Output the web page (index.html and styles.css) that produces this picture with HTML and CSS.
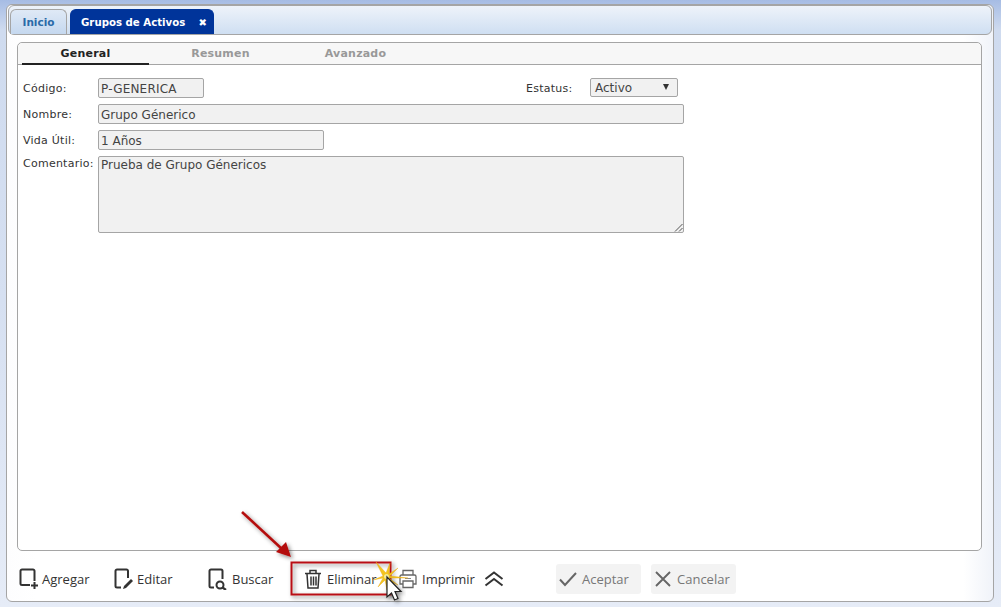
FILE: index.html
```html
<!DOCTYPE html>
<html lang="es">
<head>
<meta charset="utf-8">
<title>Grupos de Activos</title>
<link rel="stylesheet" href="styles.css">
</head>
<body>
<div class="window">
  <div class="tabbar">
    <div class="tab tab-home">Inicio</div>
    <div class="tab tab-active"><span>Grupos de Activos</span><span class="tab-close">✖</span></div>
  </div>
  <div class="panel">
    <div class="subtabs">
      <div class="subtab on">General</div>
      <div class="subtab">Resumen</div>
      <div class="subtab">Avanzado</div>
    </div>
    <div class="form">
      <div class="row row-code">
        <label class="lbl">Código:</label>
        <div class="field f-code">P-GENERICA</div>
        <label class="lbl lbl-status">Estatus:</label>
        <div class="select"><span>Activo</span><span class="caret"></span></div>
      </div>
      <div class="row">
        <label class="lbl">Nombre:</label>
        <div class="field f-wide">Grupo Génerico</div>
      </div>
      <div class="row">
        <label class="lbl">Vida Útil:</label>
        <div class="field f-mid">1 Años</div>
      </div>
      <div class="row row-area">
        <label class="lbl">Comentario:</label>
        <div class="field f-area">Prueba de Grupo Génericos
          <svg class="grip" width="9" height="9" viewBox="0 0 9 9"><path d="M8.500 1 1 8.500M8.500 5 5 8.500" stroke="#555" fill="none"/></svg>
        </div>
      </div>
    </div>
  </div>
  <div class="toolbar">
    <div class="tool t-add">
      <svg width="20" height="22" viewBox="0 0 20 22"><path d="M11 17H3a1.500 1.500 0 0 1-1.500-1.500V3A1.500 1.500 0 0 1 3 1.500h11A1.500 1.500 0 0 1 15.500 3v10" fill="none" stroke="#333" stroke-width="2"/><path d="M15.500 14v7M12 17.500h7" stroke="#333" stroke-width="2" fill="none"/></svg>
      <span>Agregar</span>
    </div>
    <div class="tool t-edit">
      <svg width="20" height="22" viewBox="0 0 20 22"><path d="M7 19.500H3a1.500 1.500 0 0 1-1.500-1.500V3A1.500 1.500 0 0 1 3 1.500h9.500A1.500 1.500 0 0 1 14 3v7" fill="none" stroke="#333" stroke-width="2"/><path d="M9 21l1-3 7-7 2 2-7 7z" fill="#333"/></svg>
      <span>Editar</span>
    </div>
    <div class="tool t-find">
      <svg width="20" height="22" viewBox="0 0 20 22"><path d="M6 19.500H3a1.500 1.500 0 0 1-1.500-1.500V3A1.500 1.500 0 0 1 3 1.500h10A1.500 1.500 0 0 1 14.500 3v8" fill="none" stroke="#333" stroke-width="2"/><circle cx="12" cy="17" r="3.500" fill="none" stroke="#333" stroke-width="2"/><path d="M14.500 19.500 18 22" stroke="#333" stroke-width="2.200" fill="none"/></svg>
      <span>Buscar</span>
    </div>
    <div class="tool t-del">
      <svg width="18" height="20" viewBox="0 0 18 20"><path d="M1 4.500h16M6 4V1.500h6V4M3 5l1 14h10l1-14M7 7.500V16.500M9.500 7.500V16.500M12 7.500V16.500" fill="none" stroke="#333" stroke-width="1.500"/></svg>
      <span>Eliminar</span>
    </div>
    <div class="tool t-print">
      <svg width="18" height="20" viewBox="0 0 18 20"><path d="M4 6V1.500h10V6M4 15H1V7.500A1.500 1.500 0 0 1 2.500 6h13A1.500 1.500 0 0 1 17 7.500V15h-3M4 12h10v6.500H4z" fill="none" stroke="#666" stroke-width="1.300"/><path d="M6 9.500h6" stroke="#888"/></svg>
      <span>Imprimir</span>
    </div>
    <svg class="chev" width="20" height="16" viewBox="0 0 20 16"><path d="M1.500 8 10 1.500 18.500 8M1.500 14.500 10 8l8.500 6.500" fill="none" stroke="#333" stroke-width="2"/></svg>
    <div class="btn btn-ok">
      <svg width="18" height="16" viewBox="0 0 18 16"><path d="M1 8.500 6 14 17 2" fill="none" stroke="#666" stroke-width="2"/></svg>
      <span>Aceptar</span>
    </div>
    <div class="btn">
      <svg width="18" height="18" viewBox="0 0 18 18"><path d="M2 2l14 14M16 2 2 16" fill="none" stroke="#666" stroke-width="1.900"/></svg>
      <span>Cancelar</span>
    </div>
  </div>
</div>

<svg class="overlay" width="1001" height="607" viewBox="0 0 1001 607">
  <defs>
    <filter id="soft" x="-30%" y="-30%" width="160%" height="160%"><feDropShadow dx="2" dy="2" stdDeviation="2" flood-color="#000" flood-opacity=".45"/></filter>
  </defs>
  <g filter="url(#soft)">
    <rect x="291.500" y="562.500" width="99" height="32" fill="none" stroke="#b90f13" stroke-width="2"/>
    <path d="M242 512 282 549" stroke="#b4100f" stroke-width="2.600" fill="none"/>
    <path d="M291 557 276 552 286 542z" fill="#b4100f"/>
  </g>
  <path d="M376 562 386 573 390 563 389 574 398 568 390 576 408 578 389 578 398 585 388 580 387 590 385 580 378 587 383 578 373 580 383 576z" fill="#f3c51e" stroke="#e8a714" stroke-width=".4"/>
  <circle cx="386.500" cy="576.500" r="2.500" fill="#f4eb9a"/>
  <path d="M387 577v20l4.500-4 3 7 3.500-1.500-3-7h6z" fill="#fff" stroke="#222" stroke-width="1.200" filter="url(#soft)"/>
</svg>
</body>
</html>
```

FILE: styles.css
```css
* { box-sizing: border-box; }
html, body { margin: 0; height: 100%; }
body {
  width: 1001px;
  height: 607px;
  overflow: hidden;
  position: relative;
  padding: 4px 7px 5px 6px;
  background: linear-gradient(#a6bce4 0, #cfdbef 30px, #d6e0f1 300px, #e6ecf7 607px);
  font-family: "DejaVu Sans", sans-serif;
  font-size: 11px;
  color: #333;
}
.window {
  height: 598px;
  display: flex;
  flex-direction: column;
  padding: 0 1px;
  background: linear-gradient(90deg, #fdfdfe 0, #fff 3%, #fff 97%, #f0f3f9 100%);
  border: 1px solid #a5a5a5;
  border-radius: 6px;
}
.tabbar {
  height: 30px;
  flex: none;
  display: flex;
  align-items: flex-end;
  gap: 3px;
  padding-left: 1px;
  background: linear-gradient(#eef3fa, #cfdff2);
  border: 1px solid #a5a5a5;
  border-radius: 6px;
}
.tab {
  height: 25px;
  display: flex;
  align-items: center;
  font-weight: 700;
  font-size: 10.500px;
  white-space: nowrap;
  border: 1px solid #a5a5a5;
  border-bottom: 0;
  border-radius: 6px 6px 0 0;
}
.tab-home {
  width: 57px;
  justify-content: center;
  color: #2a6aa8;
  background: linear-gradient(#dfe9f6, #c5d8ef);
}
.tab-active {
  width: 144px;
  padding: 0 6px 0 10px;
  justify-content: space-between;
  font-size: 10.200px;
  color: #fff;
  background: #00349a;
  border-color: #00349a;
}
.tab-close { font-size: 10px; }
.panel {
  height: 509px;
  flex: none;
  margin: 7px 10px 0 9px;
  background: #fff;
  border: 1px solid #a5a5a5;
  border-radius: 5px;
}
.subtabs {
  height: 22px;
  display: flex;
  padding-left: 4px;
  background: #f7f7f7;
  border-bottom: 1px solid #a5a5a5;
  border-radius: 5px 5px 0 0;
}
.subtab {
  width: 127px;
  margin-right: 8px;
  height: 21px;
  text-align: center;
  padding-top: 4px;
  font-weight: 700;
  font-size: 11px;
  letter-spacing: .2px;
  color: #999;
}
.subtab.on { color: #222; border-bottom: 2px solid #222; height: 22px; }
.form { padding: 13px 5px 0 5px; display: flex; flex-direction: column; gap: 6px; }
.row { display: flex; align-items: center; height: 20px; }
.row-area { height: 77px; align-items: flex-start; }
.row-area .lbl { padding-top: 1px; }
.lbl { width: 75px; flex: none; color: #333; letter-spacing: .25px; }
.lbl-status { width: 64px; margin-left: 322px; }
.field {
  position: relative;
  height: 20px;
  padding: 3px 2px 0;
  font-size: 12px;
  line-height: 15px;
  background: #f1f1f1;
  border: 1px solid #a5a5a5;
  border-radius: 2px;
  color: #444;
}
.f-code { width: 106px; letter-spacing: .2px; }
.f-wide { width: 586px; }
.f-mid { width: 226px; }
.f-area { width: 586px; height: 77px; padding-top: 1px; }
.grip { position: absolute; right: 0; bottom: 0; }
.select {
  width: 88px;
  height: 19px;
  display: flex;
  align-items: center;
  justify-content: space-between;
  padding: 0 8px 0 4px;
  font-size: 12px;
  background: #f1f1f1;
  border: 1px solid #a5a5a5;
  border-radius: 2px;
  color: #444;
  margin-top: -1px;
}
.caret { width: 0; height: 0; border: 3.500px solid transparent; border-top: 6px solid #333; border-bottom: 0; margin-top: -2px; }
.toolbar {
  flex: 1;
  display: flex;
  align-items: center;
  padding: 5px 0 0 11px;
  font-family: "Open Sans", sans-serif;
  font-size: 13px;
  color: #333;
}
.tool { display: flex; align-items: center; gap: 3px; }
.t-add { width: 95px; }
.t-edit { width: 94px; }
.t-find { width: 96px; gap: 4px; }
.t-del { width: 95px; gap: 5px; }
.t-print { width: 85px; gap: 5px; }
.chev { margin-right: 52px; }
.btn {
  width: 85px;
  height: 30px;
  display: flex;
  align-items: center;
  gap: 5px;
  padding-left: 3px;
  margin-right: 10px;
  color: #777;
  background: #f3f3f3;
  border-radius: 3px;
}
.overlay { position: absolute; left: 0; top: 0; pointer-events: none; }
```
